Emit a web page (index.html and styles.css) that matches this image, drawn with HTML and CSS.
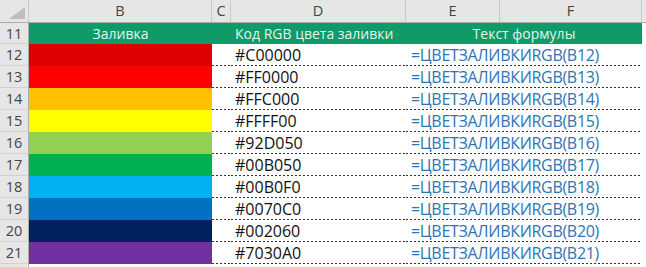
FILE: index.html
```html
<!DOCTYPE html>
<html lang="ru">
<head>
<meta charset="utf-8">
<link rel="stylesheet" href="styles.css">
</head>
<body>
<div class="sheet">
  <div class="corner"><svg width="16" height="12" viewBox="0 0 16 12"><polygon points="16,0 16,12 0,12" fill="#bdbdbd"/></svg></div>
  <div class="colhead">B</div>
  <div class="colhead">C</div>
  <div class="colhead">D</div>
  <div class="colhead">E</div>
  <div class="colhead">F</div>
  <div class="colhead last"></div>

  <div class="rowhead">11</div>
  <div class="title center">Заливка</div>
  <div class="title"></div>
  <div class="title left">Код RGB цвета заливки</div>
  <div class="title center span2">Текст формулы</div>
  <div class="blank"></div>

  <div class="rowhead">12</div><div class="fill" style="background:#dc0000"></div><div class="cell"></div><div class="cell code">#C00000</div><div class="cell formula span2">=ЦВЕТЗАЛИВКИRGB(B12)</div><div class="blank"></div>
  <div class="rowhead">13</div><div class="fill" style="background:#ff0000"></div><div class="cell"></div><div class="cell code">#FF0000</div><div class="cell formula span2">=ЦВЕТЗАЛИВКИRGB(B13)</div><div class="blank"></div>
  <div class="rowhead">14</div><div class="fill" style="background:#ffc000"></div><div class="cell"></div><div class="cell code">#FFC000</div><div class="cell formula span2">=ЦВЕТЗАЛИВКИRGB(B14)</div><div class="blank"></div>
  <div class="rowhead">15</div><div class="fill" style="background:#ffff00"></div><div class="cell"></div><div class="cell code">#FFFF00</div><div class="cell formula span2">=ЦВЕТЗАЛИВКИRGB(B15)</div><div class="blank"></div>
  <div class="rowhead">16</div><div class="fill" style="background:#92d050"></div><div class="cell"></div><div class="cell code">#92D050</div><div class="cell formula span2">=ЦВЕТЗАЛИВКИRGB(B16)</div><div class="blank"></div>
  <div class="rowhead">17</div><div class="fill" style="background:#00b050"></div><div class="cell"></div><div class="cell code">#00B050</div><div class="cell formula span2">=ЦВЕТЗАЛИВКИRGB(B17)</div><div class="blank"></div>
  <div class="rowhead">18</div><div class="fill" style="background:#00b0f0"></div><div class="cell"></div><div class="cell code">#00B0F0</div><div class="cell formula span2">=ЦВЕТЗАЛИВКИRGB(B18)</div><div class="blank"></div>
  <div class="rowhead">19</div><div class="fill" style="background:#0070c0"></div><div class="cell"></div><div class="cell code">#0070C0</div><div class="cell formula span2">=ЦВЕТЗАЛИВКИRGB(B19)</div><div class="blank"></div>
  <div class="rowhead">20</div><div class="fill" style="background:#002060"></div><div class="cell"></div><div class="cell code">#002060</div><div class="cell formula span2">=ЦВЕТЗАЛИВКИRGB(B20)</div><div class="blank"></div>
  <div class="rowhead">21</div><div class="fill" style="background:#7030a0"></div><div class="cell"></div><div class="cell code">#7030A0</div><div class="cell formula span2">=ЦВЕТЗАЛИВКИRGB(B21)</div><div class="blank"></div>
  <div class="rowhead"></div><div class="blank full"></div>
</div>
</body>
</html>
```

FILE: styles.css
```css
html, body {
  margin: 0;
  padding: 0;
  background: #ffffff;
  overflow: hidden;
}

.sheet {
  display: grid;
  grid-template-columns: 29px 183px 19px 175px 94px 142px 4px;
  grid-template-rows: 23px 21px repeat(10, 22px) 22px;
  width: 646px;
  height: 267px;
  overflow: hidden;
  font-family: "Open Sans", "Noto Sans", sans-serif;
}

.sheet > div {
  box-sizing: border-box;
  min-width: 0;
  white-space: nowrap;
  overflow: hidden;
}

.corner {
  background: #e6e6e6;
  border-right: 1px solid #c8c8c8;
  border-bottom: 1px solid #ababab;
  display: flex;
  align-items: flex-end;
  justify-content: flex-end;
  padding: 0 3px 3px 0;
}

.corner svg {
  display: block;
}

.colhead {
  background: #e6e6e6;
  border-right: 1px solid #c8c8c8;
  border-bottom: 1px solid #ababab;
  color: #444444;
  font-size: 14.5px;
  line-height: 22px;
  text-align: center;
}

.colhead.last {
  border-right: none;
}

.rowhead {
  background: #e6e6e6;
  border-right: 1px solid #ababab;
  border-bottom: 1px solid #d0d0d0;
  color: #444444;
  font-size: 14.5px;
  line-height: 21px;
  text-align: center;
}

.title {
  background: #0f9a68;
  color: #e2f5ec;
  font-size: 14px;
  line-height: 21px;
}

.title.center {
  text-align: center;
}

.title.left {
  padding-left: 4px;
}

.span2 {
  grid-column: span 2;
}

.fill {
  border: none;
}

.cell {
  background-image: repeating-linear-gradient(to right, #333333 0 2px, transparent 2px 4px);
  background-size: 100% 1px;
  background-position: 0 100%;
  background-repeat: no-repeat;
  font-size: 16px;
  line-height: 22px;
}

.code {
  color: #111111;
  padding-left: 4px;
}

.formula {
  color: #2e75b6;
  padding-left: 5px;
  letter-spacing: -0.3px;
}

.blank {
  background: #ffffff;
}

.blank.full {
  grid-column: span 6;
}
```
